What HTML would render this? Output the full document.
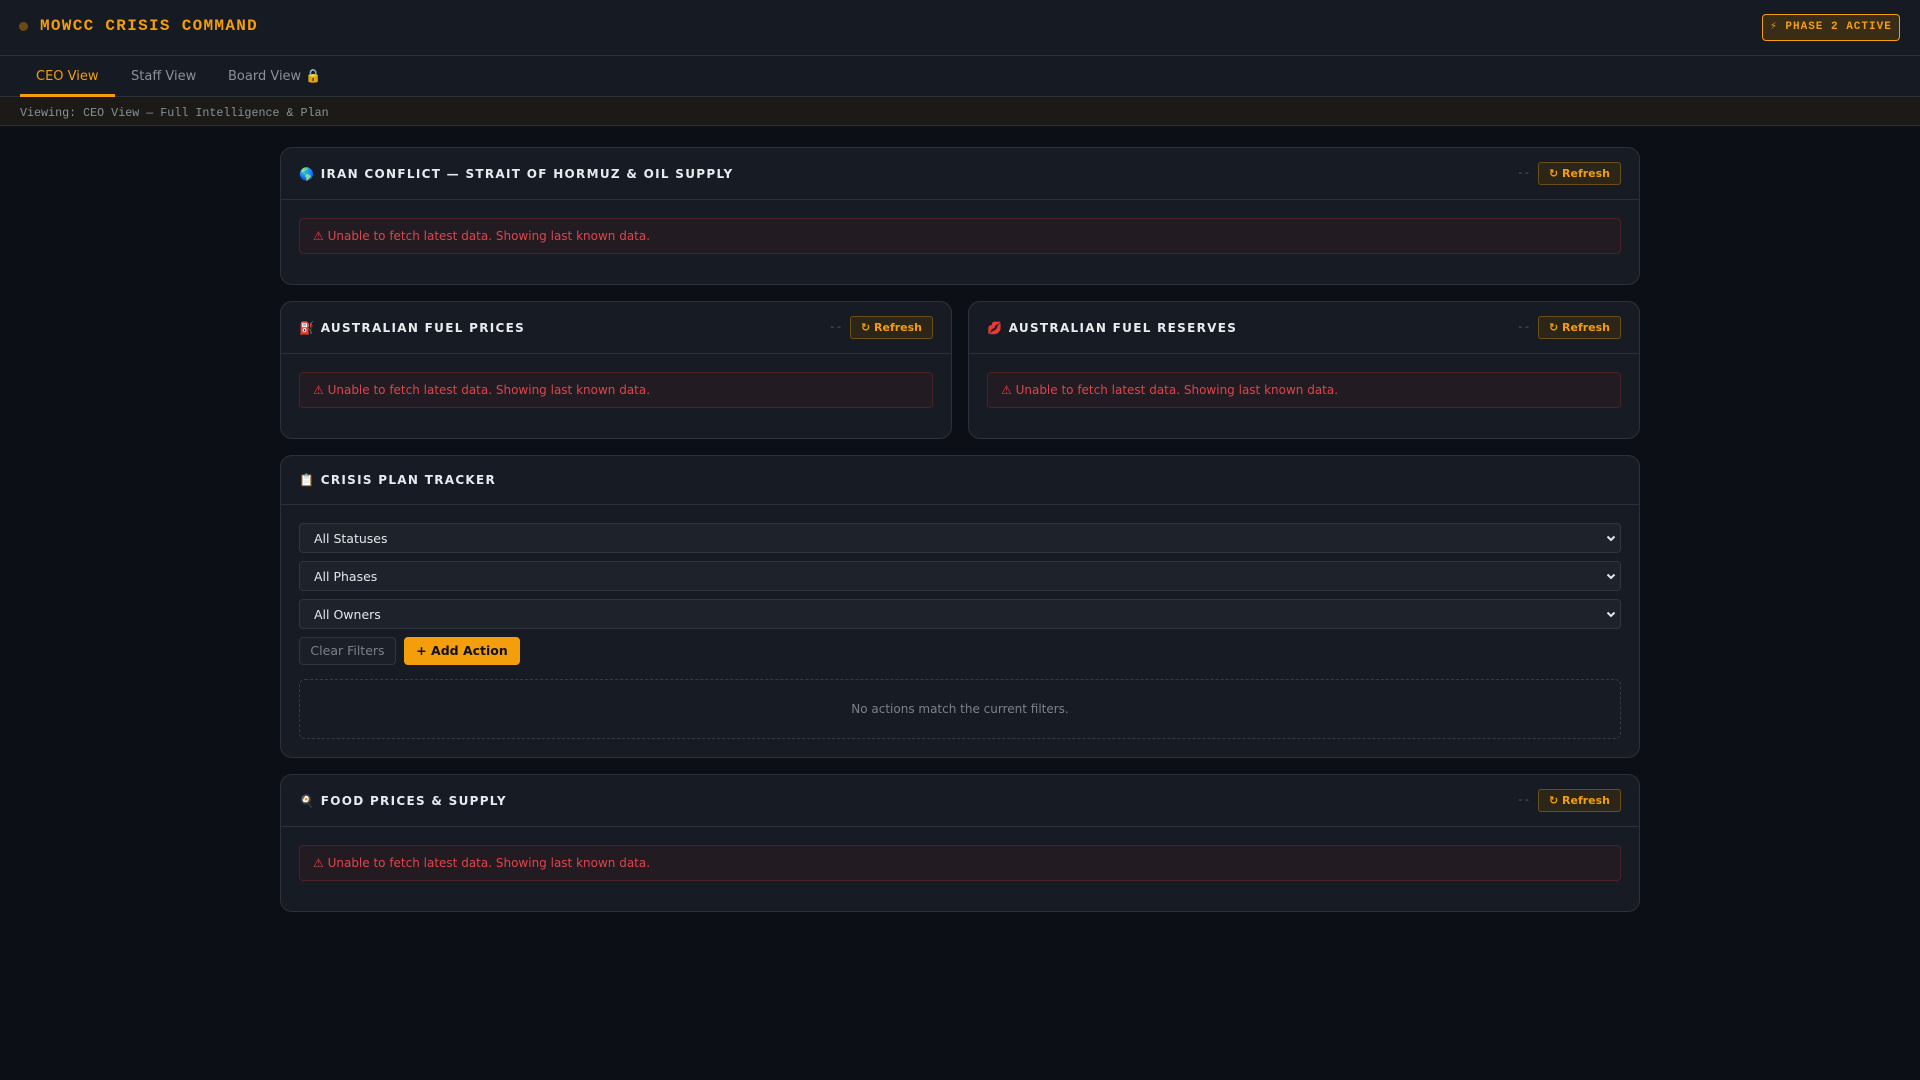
<!DOCTYPE html>
<html><head><meta charset="utf-8"><style>
*{box-sizing:border-box;margin:0;padding:0}
body{width:1920px;height:1080px;background:#0c0f16;font-family:"DejaVu Sans","Liberation Sans",sans-serif;color:#e6e8ee;overflow:hidden;position:relative}
.top{position:absolute;left:0;top:0;width:1920px;height:56px;background:#161a22;border-bottom:1px solid #2c313b}
.dot{position:absolute;left:19px;top:22px;width:9px;height:9px;border-radius:50%;background:#6b4a14}
.title{position:absolute;left:40px;top:17px;font-family:"Liberation Mono",monospace;font-weight:bold;font-size:16px;color:#f59e0b;letter-spacing:1.3px}
.badge{position:absolute;left:1762px;top:14px;width:138px;height:27px;border:1px solid #f59e0b;border-radius:4px;background:#3a2d18;color:#f59e0b;font-family:"Liberation Mono",monospace;font-weight:bold;font-size:11px;letter-spacing:1px;text-align:center;line-height:25px}
.tabs{position:absolute;left:0;top:56px;width:1920px;height:41px;background:#161a22;border-bottom:1px solid #2c313b}
.tab{position:absolute;top:13px;font-size:13px;color:#8a909c}
.tab.on{color:#f59e0b}
.ul{position:absolute;left:20px;top:38px;width:95px;height:3px;background:#f59e0b}
.view{position:absolute;left:0;top:97px;width:1920px;height:29px;background:#1b1a17;border-bottom:1px solid #2c313b;font-family:"Liberation Mono",monospace;font-size:11.7px;color:#8b8f96;padding:9px 0 0 20px}
.card{position:absolute;background:#171b23;border:1px solid #2c313b;border-radius:12px}
.hd{position:absolute;left:0;top:0;right:0;height:52px;border-bottom:1px solid #2c313b}
.ht{position:absolute;left:18px;top:19px;font-size:12px;font-weight:bold;letter-spacing:1.3px;color:#e8eaee}
.dash{position:absolute;top:20px;font-family:"Liberation Mono",monospace;font-size:11px;color:#596070}
.rf{position:absolute;top:14px;width:83px;height:23px;border:1px solid #6b4f17;border-radius:3px;background:#2c2619;color:#f59e0b;font-size:11px;font-weight:bold;text-align:center;line-height:21px}
.err{position:absolute;left:18px;right:18px;top:70px;height:36px;border:1px solid #4a2228;border-radius:4px;background:#221b22;color:#e0444a;font-size:12px;padding:10px 0 0 13px}
.sel{position:absolute;left:18px;right:18px;height:30px;border:1px solid #30353f;border-radius:4px;background:#1e222b;font-size:12.5px;color:#e4e6ea;padding:7px 0 0 14px}
.sel svg{position:absolute;right:4px;top:11px}
</style></head><body>
<div class="top"><div class="dot"></div><div class="title">MOWCC CRISIS COMMAND</div><div class="badge">⚡ PHASE 2 ACTIVE</div></div>
<div class="tabs"><div class="tab on" style="left:36px">CEO View</div><div class="tab" style="left:131px">Staff View</div><div class="tab" style="left:228px">Board View 🔒</div><div class="ul"></div></div>
<div class="view">Viewing: CEO View — Full Intelligence &amp; Plan</div>

<div class="card" style="left:280px;top:147px;width:1360px;height:138px">
<div class="hd"><div class="ht">🌎 IRAN CONFLICT — STRAIT OF HORMUZ &amp; OIL SUPPLY</div><div class="dash" style="left:1236px">--</div><div class="rf" style="left:1257px">↻ Refresh</div></div>
<div class="err">⚠ Unable to fetch latest data. Showing last known data.</div></div>

<div class="card" style="left:280px;top:301px;width:672px;height:138px">
<div class="hd"><div class="ht">⛽ AUSTRALIAN FUEL PRICES</div><div class="dash" style="left:548px">--</div><div class="rf" style="left:569px">↻ Refresh</div></div>
<div class="err">⚠ Unable to fetch latest data. Showing last known data.</div></div>

<div class="card" style="left:968px;top:301px;width:672px;height:138px">
<div class="hd"><div class="ht">💋 AUSTRALIAN FUEL RESERVES</div><div class="dash" style="left:548px">--</div><div class="rf" style="left:569px">↻ Refresh</div></div>
<div class="err">⚠ Unable to fetch latest data. Showing last known data.</div></div>

<div class="card" style="left:280px;top:455px;width:1360px;height:303px">
<div class="hd" style="height:49px"><div class="ht" style="top:17px">📋 CRISIS PLAN TRACKER</div></div>
<div class="sel" style="top:67px">All Statuses<svg width="10" height="7" viewBox="0 0 10 7"><path d="M1.5 1.5l3.5 3.5 3.5-3.5" stroke="#e4e6ea" stroke-width="2" fill="none"/></svg></div>
<div class="sel" style="top:105px">All Phases<svg width="10" height="7" viewBox="0 0 10 7"><path d="M1.5 1.5l3.5 3.5 3.5-3.5" stroke="#e4e6ea" stroke-width="2" fill="none"/></svg></div>
<div class="sel" style="top:143px">All Owners<svg width="10" height="7" viewBox="0 0 10 7"><path d="M1.5 1.5l3.5 3.5 3.5-3.5" stroke="#e4e6ea" stroke-width="2" fill="none"/></svg></div>
<div style="position:absolute;left:18px;top:181px;width:97px;height:28px;border:1px solid #30353f;border-radius:4px;background:#1b1f27;color:#7b818c;font-size:12.5px;text-align:center;line-height:26px">Clear Filters</div>
<div style="position:absolute;left:123px;top:181px;width:116px;height:28px;border-radius:4px;background:#f59e0b;color:#111;font-size:12.5px;font-weight:bold;text-align:center;line-height:28px">+ Add Action</div>
<div style="position:absolute;left:18px;right:18px;top:223px;height:60px;border:1px dashed #363b46;border-radius:6px;color:#7b818c;font-size:12px;text-align:center;line-height:58px">No actions match the current filters.</div>
</div>

<div class="card" style="left:280px;top:774px;width:1360px;height:138px">
<div class="hd"><div class="ht">🍳 FOOD PRICES &amp; SUPPLY</div><div class="dash" style="left:1236px">--</div><div class="rf" style="left:1257px">↻ Refresh</div></div>
<div class="err">⚠ Unable to fetch latest data. Showing last known data.</div></div>
</body></html>
